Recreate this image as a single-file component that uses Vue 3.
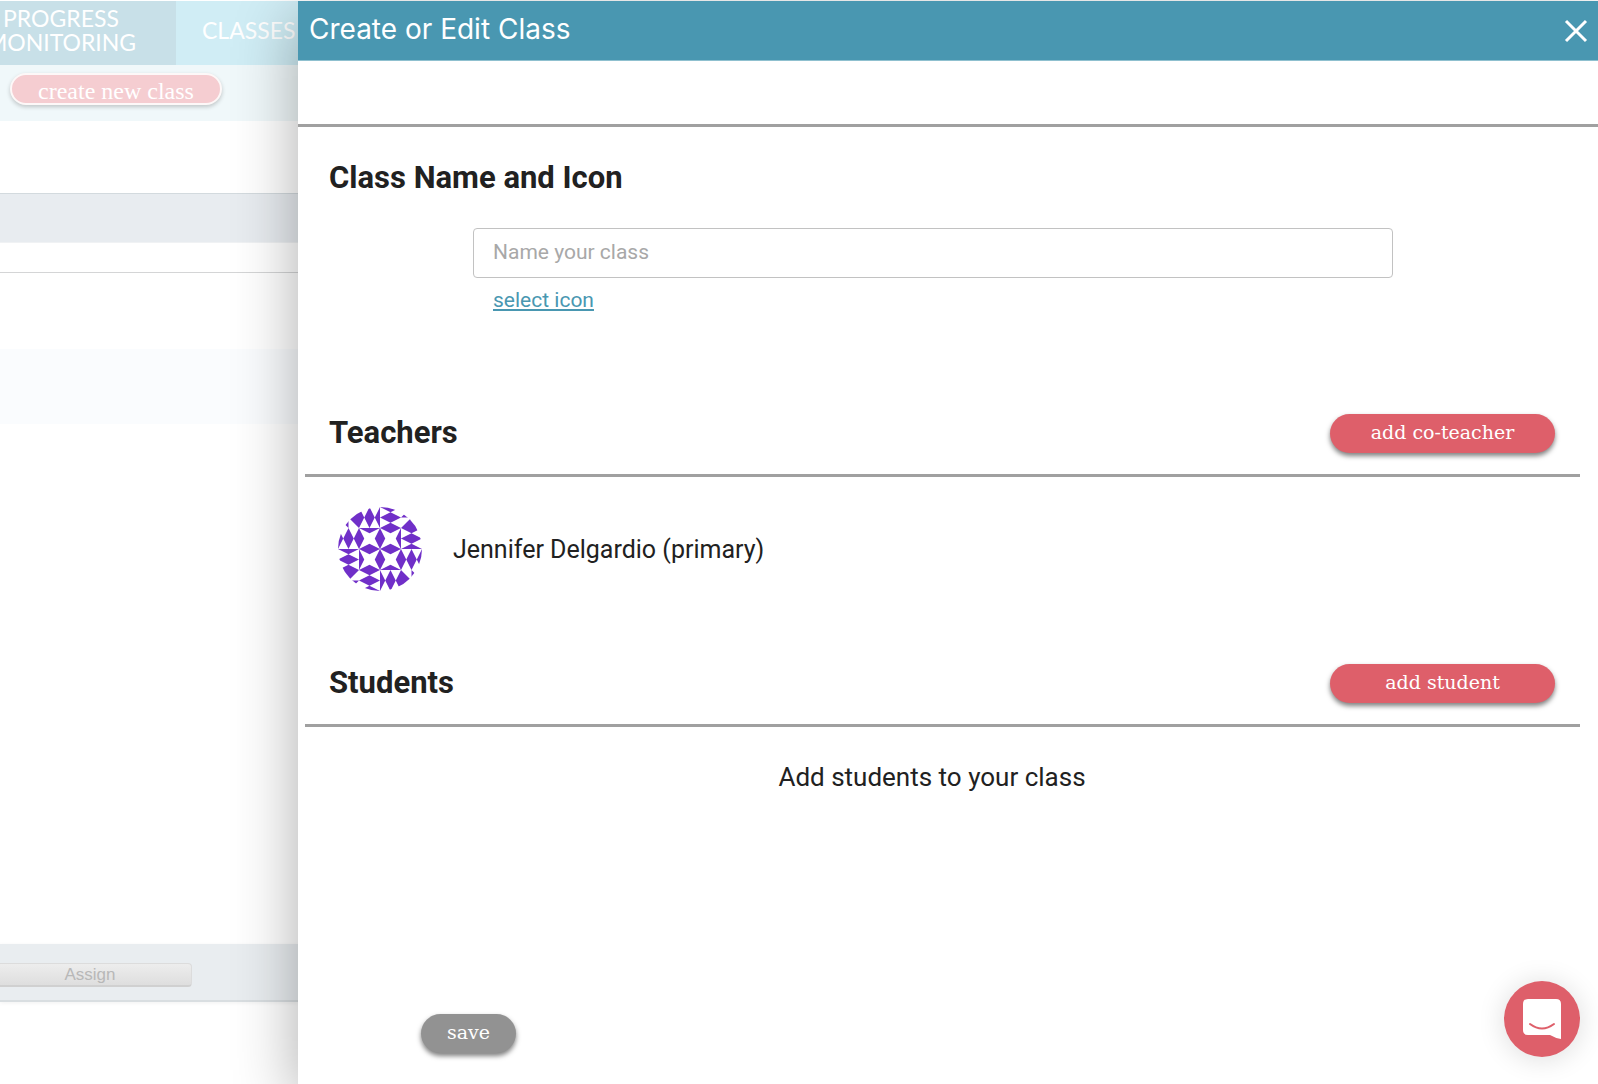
<template>
  <div class="page">
    <!-- dimmed classes page, partly covered by the drawer -->
    <div class="classes">
      <nav class="tabs">
        <a href="#" class="tab tab--progress">PROGRESS MONITORING</a>
        <a href="#" class="tab tab--classes">CLASSES</a>
      </nav>
      <div class="toolbar">
        <button type="button" class="create-btn">create new class</button>
      </div>
      <div class="list-head"></div>
      <div class="list-filter"></div>
      <div class="list-row"></div>
      <div class="list-footer">
        <button type="button" class="assign-btn">Assign</button>
      </div>
    </div>

    <form class="drawer" @submit.prevent>
      <header class="drawer-header">
        <h1>Create or Edit Class</h1>
        <button type="button" class="close-btn" aria-label="Close">
          <svg viewBox="0 0 24 24" width="24" height="24">
            <path d="M2 2 L22 22 M22 2 L2 22" />
          </svg>
        </button>
      </header>
      <div class="drawer-bar"></div>

      <section class="name-section">
        <h2>Class Name and Icon</h2>
        <div class="name-field">
          <input v-model="className" type="text" aria-label="Class name" placeholder="Name your class" />
          <a href="#">select icon</a>
        </div>
      </section>

      <section>
        <div class="section-head">
          <h2>Teachers</h2>
          <button type="button" class="pill">add co-teacher</button>
        </div>
        <div v-for="teacher in teachers" :key="teacher.name" class="teacher">
          <svg class="avatar" viewBox="0 0 8 8" aria-hidden="true">
            <g v-for="angle in quarters" :key="angle" :transform="`rotate(${angle} 4 4)`">
              <path :d="quarterPath" />
            </g>
          </svg>
          <span>{{ teacher.name }} ({{ teacher.role }})</span>
        </div>
      </section>

      <section>
        <div class="section-head">
          <h2>Students</h2>
          <button type="button" class="pill">add student</button>
        </div>
        <p class="empty">Add students to your class</p>
      </section>

      <button type="submit" class="pill save-btn">save</button>
    </form>

    <button type="button" class="chat-btn" aria-label="Open chat">
      <svg viewBox="0 0 38 40" width="38" height="40">
        <path fill="#fff" d="M5 0 H33 Q38 0 38 5 V40 Q32 39 27 36 H5 Q0 36 0 31 V5 Q0 0 5 0 Z" />
        <path class="smile" d="M7 25 Q19 34 31 25" />
      </svg>
    </button>
  </div>
</template>

<script setup>
import { ref } from 'vue'

const className = ref('')
const teachers = [{ name: 'Jennifer Delgardio', role: 'primary' }]

// the avatar is one quarter of a pattern, turned four times
const quarters = [0, 90, 180, 270]
const quarterPath = [
  // upper cell
  'M4 0 L5 .5 L6 0Z M4 1 L5 .5 L6 1 L5 1.5Z M4 2 L5 1.5 L6 2Z',
  // right cell
  'M6 2 L7 2.5 L8 2Z M6 3 L7 2.5 L8 3 L7 3.5Z M6 4 L7 3.5 L8 4Z',
  // star
  'M4 2 L5 2.5 L6 2Z M4 4 L5 3.5 L6 4Z M4 2 L4.5 3 L4 4Z M6 2 L5.5 3 L6 4Z',
  // corner
  'M7 1 L6 2 L8 2Z M7 0 L6 1 L7 1Z'
].join(' ')
</script>

<style>
body {
  margin: 0;
  background: #fff;
}
</style>

<style scoped>
.page {
  position: relative;
  display: flex;
  min-height: 100vh;
  overflow: hidden;
  color: #212121;
  font-family: Roboto, "Liberation Sans", sans-serif;
}

button {
  cursor: pointer;
}

h1,
h2,
p {
  margin: 0;
}

/* ---- page behind the drawer ---- */
.classes {
  display: flex;
  flex: 0 0 298px;
  flex-direction: column;
  min-width: 0;
  padding-top: 1px;
  box-sizing: border-box;
  overflow: hidden;
}

.tabs {
  display: flex;
  height: 64px;
  margin-left: -54px;
}

.tab {
  display: flex;
  flex: none;
  align-items: center;
  justify-content: center;
  box-sizing: border-box;
  padding-bottom: 6px;
  color: #fff;
  font-family: Lato, sans-serif;
  font-size: 23px;
  line-height: 24px;
  text-align: center;
  text-decoration: none;
}

.tab--progress {
  width: 230px;
  padding-left: 30px;
  padding-right: 30px;
  background: #c8e0e8;
}

.tab--classes {
  justify-content: flex-start;
  width: 160px;
  padding-left: 26px;
  background: #d0edf5;
}

.toolbar {
  height: 56px;
  padding: 8px 10px 0;
  box-sizing: border-box;
  background: #f0f8fa;
}

.create-btn {
  width: 212px;
  height: 32px;
  padding: 3px 0 0;
  border: 2px solid #fdf8f8;
  border-radius: 16px;
  background: #f5cdd1;
  box-shadow: 0 2px 4px rgba(0, 0, 0, 0.2);
  color: #fff;
  font-family: "Liberation Serif", serif;
  font-size: 24px;
  line-height: 24px;
}

.list-head {
  height: 48px;
  margin-top: 72px;
  border-top: 1px solid #d3dade;
  border-bottom: 1px solid #f0f2f4;
  background: #e8ecf0;
}

.list-filter {
  height: 29px;
  border-bottom: 1px solid #d4d5d6;
}

.list-row {
  height: 75px;
  margin-top: 76px;
  background: #fafcfe;
}

.list-footer {
  height: 37px;
  margin-top: auto;
  margin-bottom: 82px;
  padding-top: 19px;
  border-bottom: 2px solid #d9dee1;
  background: #e9edf0;
  box-shadow: 0 1px 4px rgba(0, 0, 0, 0.06);
}

.assign-btn {
  width: 204px;
  height: 24px;
  margin-left: -12px;
  padding: 0;
  border: 1px solid #dcdcdc;
  border-bottom: 2px solid #d0d0d0;
  border-radius: 4px;
  background: linear-gradient(#ededed, #dedede);
  color: #b8b8b8;
  font-family: "Liberation Sans", sans-serif;
  font-size: 17px;
  line-height: 20px;
}

/* ---- drawer ---- */
.drawer {
  position: relative;
  display: flex;
  flex: 1;
  flex-direction: column;
  min-width: 0;
  margin-top: 1px;
  padding-bottom: 31px;
  background: #fff;
  box-shadow: 0 16px 60px rgba(0, 0, 0, 0.33);
}

.drawer-header {
  display: flex;
  align-items: center;
  justify-content: space-between;
  height: 60px;
  padding: 0 10px 0 11px;
  box-sizing: border-box;
  border-bottom: 1px solid #8fc0cf;
  background: #4997b1;
}

.drawer-header h1 {
  padding-bottom: 4px;
  color: #fff;
  font-family: Inter, sans-serif;
  font-size: 28px;
  font-weight: 400;
  line-height: 32px;
}

.close-btn {
  display: flex;
  padding: 0;
  border: 0;
  background: none;
}

.close-btn path {
  fill: none;
  stroke: #fff;
  stroke-width: 3;
}

.drawer-bar {
  height: 63px;
  border-bottom: 3px solid #a0a0a0;
}

h2 {
  font-size: 31px;
  font-weight: 700;
  line-height: 40px;
}

.name-section {
  padding: 31px 31px 0;
}

.name-field {
  display: flex;
  flex-direction: column;
  align-items: flex-start;
  gap: 10px;
  margin: 30px 174px 0 144px;
}

.name-field input {
  width: 100%;
  height: 50px;
  padding: 0 19px 2px;
  box-sizing: border-box;
  border: 1px solid #c2c2c2;
  border-radius: 4px;
  color: #212121;
  font-family: inherit;
  font-size: 21px;
}

.name-field input::placeholder {
  color: #a8a8a8;
}

.name-field a {
  margin-left: 20px;
  color: #4997b1;
  font-size: 21px;
  line-height: 24px;
}

.section-head {
  display: flex;
  align-items: center;
  justify-content: space-between;
  margin: 0 18px 0 7px;
  padding: 0 25px 21px 24px;
  border-bottom: 3px solid #a0a0a0;
}

.name-section + section {
  margin-top: 101px;
}

.pill {
  width: 225px;
  height: 39px;
  padding: 0 0 3px;
  border: 0;
  border-radius: 20px;
  background: #de5f6a;
  box-shadow: 0 3px 5px rgba(0, 0, 0, 0.5);
  color: #fff;
  font-family: "DejaVu Serif", serif;
  font-size: 19px;
}

.teacher {
  display: flex;
  align-items: center;
  gap: 31px;
  padding: 30px 40px 72px;
  font-size: 25px;
}

.avatar {
  width: 84px;
  height: 84px;
  border-radius: 50%;
}

.avatar path {
  fill: #702fc8;
}

.teacher + .teacher {
  padding-top: 0;
}

.empty {
  padding: 34px 14px 0 0;
  margin-right: 18px;
  font-size: 26px;
  line-height: 32px;
  text-align: center;
}

.save-btn {
  width: 95px;
  margin-top: auto;
  margin-left: 123px;
  background: #929292;
}

/* ---- chat launcher ---- */
.chat-btn {
  position: absolute;
  right: 18px;
  bottom: 27px;
  display: flex;
  align-items: center;
  justify-content: center;
  width: 76px;
  height: 76px;
  padding: 0;
  border: 0;
  border-radius: 50%;
  background: #de5f6a;
  box-shadow: 0 2px 28px rgba(0, 0, 0, 0.14);
}

.smile {
  fill: none;
  stroke: #de5f6a;
  stroke-width: 2;
  stroke-linecap: round;
}
</style>
